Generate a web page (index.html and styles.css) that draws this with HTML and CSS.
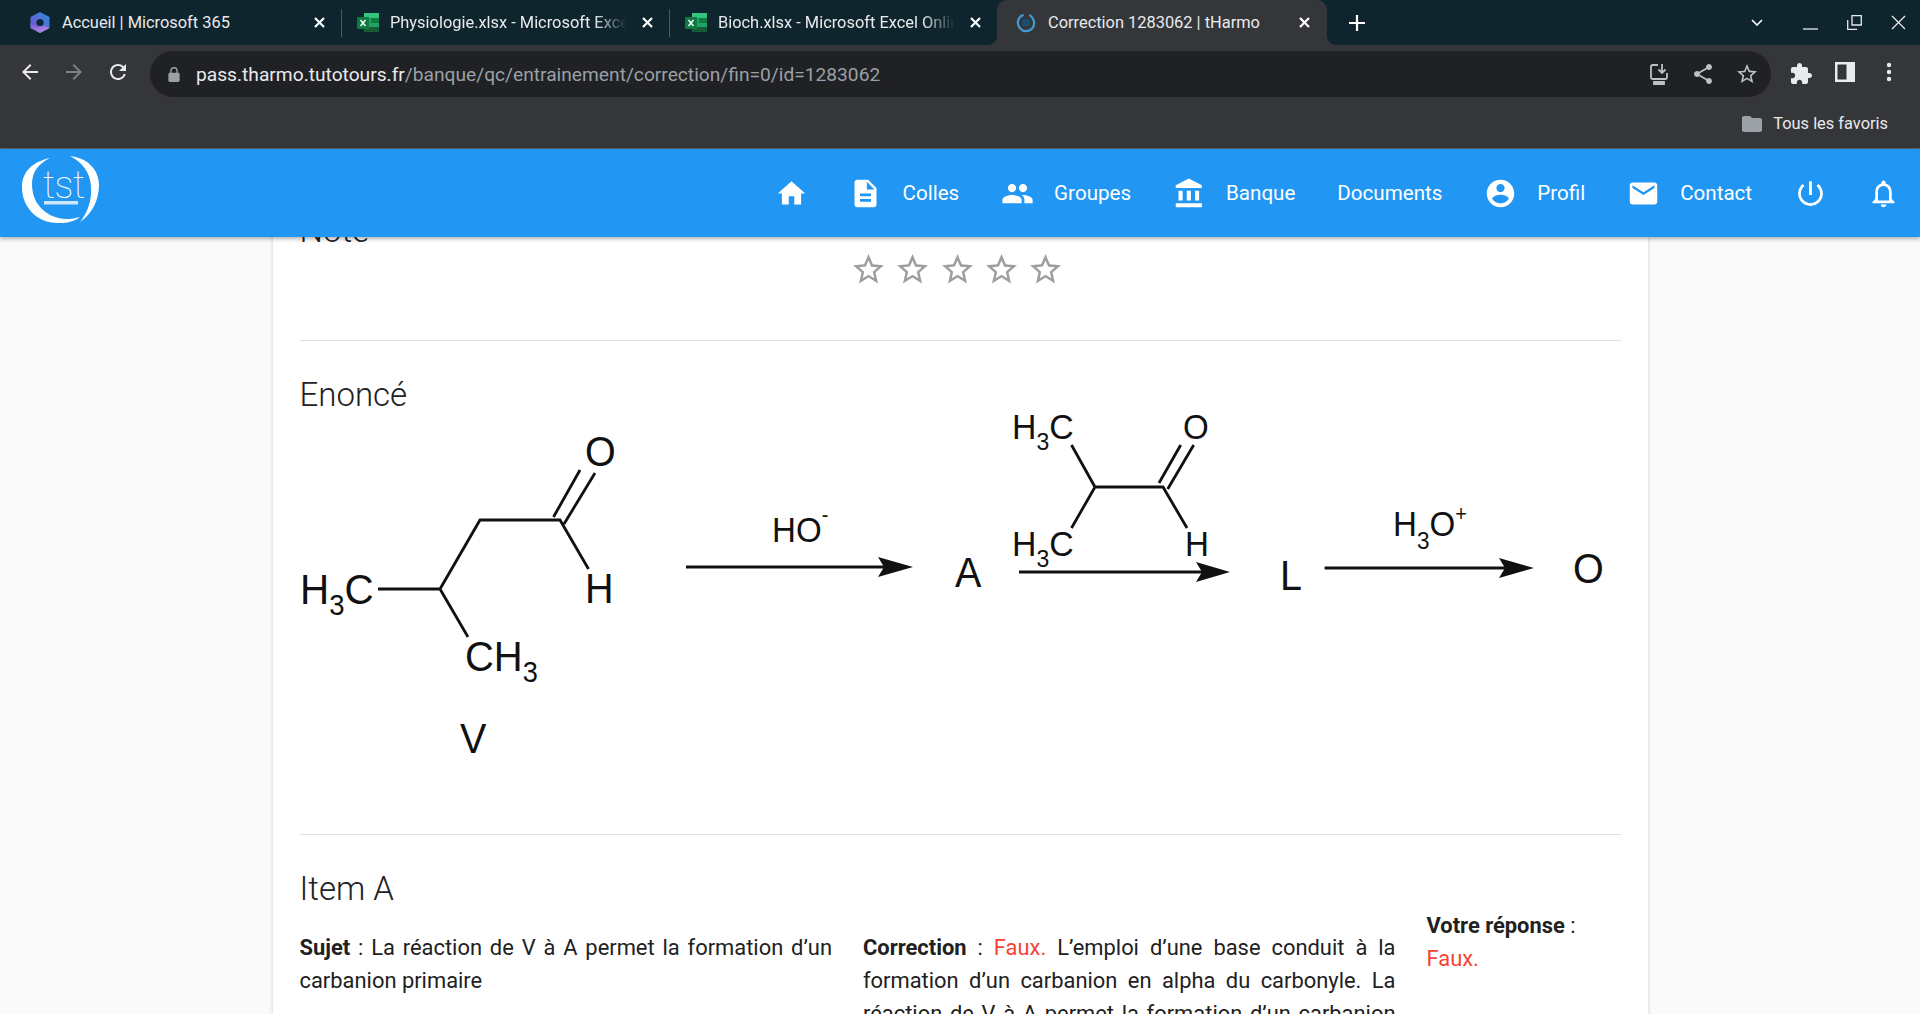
FILE: index.html
```html
<!DOCTYPE html>
<html lang="fr">
<head>
<meta charset="utf-8">
<title>Correction 1283062 | tHarmo</title>
<link rel="stylesheet" href="styles.css">
</head>
<body>
<div class="app">
  <header class="chrome">
    <div class="tabstrip">
      <div class="tab">
        <svg class="favicon" viewBox="0 0 21 21"><defs><linearGradient id="m1" x1="1" y1="0" x2="0" y2="1"><stop offset="0" stop-color="#2a8fd8"/><stop offset=".55" stop-color="#5a6ad8"/><stop offset="1" stop-color="#7b4fc8"/></linearGradient><linearGradient id="m2" x1="0" y1="0" x2="1" y2="1"><stop offset="0" stop-color="#6f5bd6"/><stop offset="1" stop-color="#c890e8"/></linearGradient></defs><path fill="url(#m1)" d="M10.500 0 20 5v11l-9.500 5L1 16V5z"/><path fill="url(#m2)" d="M1 11l7 4 7-1 5 2-9.500 5L1 16z"/><circle cx="10.500" cy="10.500" r="3.600" fill="#10263a"/></svg>
        <span class="tab-title plain">Accueil | Microsoft 365</span>
        <svg class="tab-close" viewBox="0 0 11 11"><path d="M1 1l9 9M10 1l-9 9"/></svg>
      </div>
      <i class="tab-sep"></i>
      <div class="tab">
        <svg class="favicon" viewBox="0 0 22 21"><rect x="7" y="1" width="15" height="19" fill="#21a366"/><rect x="7" y="1" width="15" height="5" fill="#33c481"/><rect x="14" y="6" width="8" height="5" fill="#107c41"/><rect x="7" y="15" width="15" height="5" fill="#185c37"/><rect x="0" y="5" width="12" height="12" rx="1" fill="#0e7a40"/><path d="M3.500 8l5 6M8.500 8l-5 6" stroke="#fff" stroke-width="1.400"/></svg>
        <span class="tab-title">Physiologie.xlsx - Microsoft Excel Online</span>
        <svg class="tab-close" viewBox="0 0 11 11"><path d="M1 1l9 9M10 1l-9 9"/></svg>
      </div>
      <i class="tab-sep"></i>
      <div class="tab">
        <svg class="favicon" viewBox="0 0 22 21"><rect x="7" y="1" width="15" height="19" fill="#21a366"/><rect x="7" y="1" width="15" height="5" fill="#33c481"/><rect x="14" y="6" width="8" height="5" fill="#107c41"/><rect x="7" y="15" width="15" height="5" fill="#185c37"/><rect x="0" y="5" width="12" height="12" rx="1" fill="#0e7a40"/><path d="M3.500 8l5 6M8.500 8l-5 6" stroke="#fff" stroke-width="1.400"/></svg>
        <span class="tab-title">Bioch.xlsx - Microsoft Excel Online</span>
        <svg class="tab-close" viewBox="0 0 11 11"><path d="M1 1l9 9M10 1l-9 9"/></svg>
      </div>
      <div class="tab tab-active">
        <svg class="favicon small" viewBox="0 0 21 21"><path d="M8 2C4 3 1.500 7 2 11c.5 4 4 8 8 8 5 0 9-3 9-8 0-4-2-7-5-9" fill="none" stroke="#3f9bd0" stroke-width="2.400"/><rect x="6.500" y="6" width="8" height="8" rx="1.500" fill="#1b4f70"/></svg>
        <span class="tab-title plain">Correction 1283062 | tHarmo</span>
        <svg class="tab-close" viewBox="0 0 11 11"><path d="M1 1l9 9M10 1l-9 9"/></svg>
      </div>
      <svg class="newtab" viewBox="0 0 16 16"><path d="M8 0v16M0 8h16"/></svg>
      <div class="window-controls">
        <svg class="wc-chevron" viewBox="0 0 12 7"><path d="M1 1l5 5 5-5"/></svg>
        <svg class="wc" viewBox="0 0 15 15"><path d="M0 14h15"/></svg>
        <svg class="wc" viewBox="0 0 15 15"><path d="M0.700 5v9.300h9.300M5 .7h9.300V10H5z"/></svg>
        <svg class="wc" viewBox="0 0 15 15"><path d="M1 1l13 13M14 1L1 14"/></svg>
      </div>
    </div>
    <div class="toolbar">
      <button class="tb-btn up"><svg viewBox="0 0 24 24"><path d="M20 11H7.830l5.590-5.590L12 4l-8 8 8 8 1.410-1.410L7.830 13H20v-2z"/></svg></button>
      <button class="tb-btn up dim"><svg viewBox="0 0 24 24"><path d="M4 11h12.170l-5.590-5.590L12 4l8 8-8 8-1.410-1.410L16.170 13H4v-2z"/></svg></button>
      <button class="tb-btn up"><svg viewBox="0 0 24 24"><path d="M17.650 6.350A7.958 7.958 0 0 0 12 4c-4.420 0-7.990 3.580-7.990 8s3.570 8 7.990 8c3.730 0 6.840-2.550 7.730-6h-2.080A5.990 5.990 0 0 1 12 18c-3.310 0-6-2.690-6-6s2.690-6 6-6c1.660 0 3.140.69 4.220 1.780L13 11h7V4l-2.350 2.350z"/></svg></button>
      <div class="omnibox">
        <svg class="lock" viewBox="0 0 12 16"><path d="M10.500 6H10V4a4 4 0 0 0-8 0v2h-.5C.7 6 0 6.700 0 7.500v7C0 15.300.7 16 1.500 16h9c.8 0 1.500-.7 1.500-1.500v-7C12 6.700 11.300 6 10.500 6zM3.500 6V4a2.500 2.500 0 0 1 5 0v2z"/></svg>
        <span class="url"><b>pass.tharmo.tutotours.fr</b>/banque/qc/entrainement/correction/fin=0/id=1283062</span>
        <button class="tb-btn omni-btn"><svg viewBox="0 0 24 24" class="stroke-icon"><path d="M11 3H5.500A1.500 1.500 0 0 0 4 4.500v11A1.500 1.500 0 0 0 5.500 17h13a1.500 1.500 0 0 0 1.500-1.500V11M15 2v9m-3.500-3.500L15 11l3.500-3.500"/><path d="M7 20h10v2H7z" fill="#bdc1c6"/></svg></button>
        <button class="tb-btn omni-btn"><svg viewBox="0 0 24 24"><path d="M18 16.080c-.76 0-1.440.3-1.960.77L8.910 12.700c.05-.23.09-.46.09-.7s-.04-.47-.09-.7l7.050-4.110c.54.5 1.250.81 2.040.81 1.660 0 3-1.340 3-3s-1.340-3-3-3-3 1.340-3 3c0 .24.04.47.09.7L8.040 9.810C7.500 9.310 6.790 9 6 9c-1.660 0-3 1.340-3 3s1.340 3 3 3c.79 0 1.500-.31 2.040-.81l7.120 4.160c-.05.21-.08.43-.08.65 0 1.610 1.310 2.920 2.920 2.920s2.920-1.310 2.920-2.920-1.310-2.920-2.920-2.920z"/></svg></button>
        <button class="tb-btn omni-btn"><svg viewBox="0 0 24 24"><path d="M22 9.240l-7.190-.62L12 2 9.190 8.630 2 9.240l5.460 4.730L5.820 21 12 17.270 18.180 21l-1.630-7.030L22 9.240zM12 15.400l-3.760 2.270 1-4.280-3.320-2.880 4.380-.38L12 6.100l1.710 4.040 4.380.38-3.320 2.880 1 4.280L12 15.400z"/></svg></button>
      </div>
      <div class="tb-right">
        <button class="tb-btn"><svg viewBox="0 0 24 24"><path d="M20.500 11H19V7c0-1.100-.9-2-2-2h-4V3.500C13 2.120 11.880 1 10.500 1S8 2.120 8 3.500V5H4c-1.100 0-1.990.9-1.990 2v3.800H3.500c1.490 0 2.700 1.210 2.700 2.700s-1.210 2.700-2.700 2.700H2V20c0 1.100.9 2 2 2h3.800v-1.500c0-1.490 1.210-2.700 2.700-2.700 1.490 0 2.700 1.210 2.700 2.700V22H17c1.100 0 2-.9 2-2v-4h1.500c1.380 0 2.500-1.120 2.500-2.500S21.880 11 20.500 11z"/></svg></button>
        <button class="tb-btn up"><svg viewBox="0 0 24 24"><path fill-rule="evenodd" d="M2 2h20v20H2zM4.500 4.500v15h9v-15z"/></svg></button>
        <button class="tb-btn up"><svg viewBox="0 0 24 24"><circle cx="12" cy="5" r="2.200"/><circle cx="12" cy="12" r="2.200"/><circle cx="12" cy="19" r="2.200"/></svg></button>
      </div>
    </div>
    <div class="bookmarks">
      <svg class="folder" viewBox="0 0 20 16"><path d="M2 0h6l2 2h8c1.100 0 2 .9 2 2v10c0 1.100-.9 2-2 2H2c-1.100 0-2-.9-2-2V2C0 .9.9 0 2 0z"/></svg>
      <span>Tous les favoris</span>
    </div>
  </header>

  <nav class="navbar">
    <svg class="logo" viewBox="20 153 84 74">
      <path fill="#fff" d="M50 158C32 162 22 172 22 187 22 208 38 224 60 223 68 223 75 221 80 217 70 220 60 220 50 215 38 208 32 198 32 184 32 172 38 164 50 158Z"/>
      <path fill="#fff" d="M70 156C88 158 99 170 99 185 99 200 92 214 80 222 88 212 92 200 91 186 90 172 82 162 70 156Z"/>
      <text class="logo-text" x="43" y="198">tst</text>
      <rect x="44" y="201" width="34" height="3.500" fill="#cfe8fc"/>
    </svg>
    <ul class="nav-items">
      <li><svg viewBox="0 0 24 24"><path d="M10 20v-6h4v6h5v-8h3L12 3 2 12h3v8z"/></svg></li>
      <li><svg viewBox="0 0 24 24"><path d="M14 2H6c-1.100 0-1.990.9-1.990 2L4 20c0 1.100.89 2 1.990 2H18c1.100 0 2-.9 2-2V8l-6-6zm2 16H8v-2h8v2zm0-4H8v-2h8v2zm-3-5V3.500L18.500 9H13z"/></svg><span>Colles</span></li>
      <li><svg viewBox="0 0 24 24"><path d="M16 11c1.660 0 2.990-1.340 2.990-3S17.660 5 16 5c-1.660 0-3 1.340-3 3s1.340 3 3 3zm-8 0c1.660 0 2.990-1.340 2.990-3S9.660 5 8 5C6.340 5 5 6.340 5 8s1.340 3 3 3zm0 2c-2.330 0-7 1.170-7 3.500V19h14v-2.500c0-2.330-4.670-3.500-7-3.500zm8 0c-.29 0-.62.02-.97.05 1.160.84 1.970 1.970 1.970 3.450V19h6v-2.500c0-2.330-4.670-3.500-7-3.500z"/></svg><span>Groupes</span></li>
      <li><svg viewBox="0 0 24 24"><path d="M4 10v7h3v-7H4zm6 0v7h3v-7h-3zM2 22h19v-3H2v3zm14-12v7h3v-7h-3zm-4.500-9L2 6v2h19V6l-9.500-5z"/></svg><span>Banque</span></li>
      <li><span class="no-icon">Documents</span></li>
      <li><svg viewBox="0 0 24 24"><path d="M12 2C6.480 2 2 6.480 2 12s4.480 10 10 10 10-4.480 10-10S17.520 2 12 2zm0 3c1.660 0 3 1.340 3 3s-1.340 3-3 3-3-1.340-3-3 1.340-3 3-3zm0 14.200c-2.500 0-4.710-1.280-6-3.220.03-1.990 4-3.080 6-3.080 1.990 0 5.970 1.090 6 3.080-1.290 1.940-3.500 3.220-6 3.220z"/></svg><span>Profil</span></li>
      <li><svg viewBox="0 0 24 24"><path d="M20 4H4c-1.100 0-1.990.9-1.990 2L2 18c0 1.100.9 2 2 2h16c1.100 0 2-.9 2-2V6c0-1.100-.9-2-2-2zm0 4l-8 5-8-5V6l8 5 8-5v2z"/></svg><span>Contact</span></li>
      <li><svg viewBox="0 0 24 24"><path d="M13 3h-2v10h2V3zm4.830 2.170l-1.420 1.420C17.990 7.860 19 9.810 19 12c0 3.870-3.130 7-7 7s-7-3.130-7-7c0-2.190 1.010-4.140 2.580-5.420L6.170 5.170C4.230 6.820 3 9.260 3 12c0 4.970 4.030 9 9 9s9-4.030 9-9c0-2.740-1.230-5.180-3.170-6.830z"/></svg></li>
      <li><svg viewBox="0 0 24 24"><path d="M12 22c1.100 0 2-.9 2-2h-4c0 1.100.9 2 2 2zm6-6v-5c0-3.070-1.640-5.640-4.500-6.320V4c0-.83-.67-1.500-1.500-1.500s-1.500.67-1.500 1.500v.68C7.630 5.360 6 7.920 6 11v5l-2 2v1h16v-1l-2-2zm-2 1H8v-6c0-2.480 1.510-4.500 4-4.500s4 2.020 4 4.500v6z"/></svg></li>
    </ul>
  </nav>

  <main class="page">
    <section class="card">
      <h2 class="title note-title">Note</h2>
      <div class="stars">
        <svg viewBox="0 0 24 24"><path d="M22 9.240l-7.190-.62L12 2 9.190 8.630 2 9.240l5.460 4.730L5.820 21 12 17.270 18.180 21l-1.630-7.030L22 9.240zM12 15.400l-3.760 2.270 1-4.280-3.320-2.880 4.380-.38L12 6.100l1.710 4.040 4.380.38-3.320 2.880 1 4.280L12 15.400z"/></svg>
        <svg viewBox="0 0 24 24"><path d="M22 9.240l-7.190-.62L12 2 9.190 8.630 2 9.240l5.460 4.730L5.820 21 12 17.270 18.180 21l-1.630-7.030L22 9.240zM12 15.400l-3.760 2.270 1-4.280-3.320-2.880 4.380-.38L12 6.100l1.710 4.040 4.380.38-3.320 2.880 1 4.280L12 15.400z"/></svg>
        <svg viewBox="0 0 24 24"><path d="M22 9.240l-7.190-.62L12 2 9.190 8.630 2 9.240l5.460 4.730L5.820 21 12 17.270 18.180 21l-1.630-7.030L22 9.240zM12 15.400l-3.760 2.270 1-4.280-3.320-2.880 4.380-.38L12 6.100l1.710 4.040 4.380.38-3.320 2.880 1 4.280L12 15.400z"/></svg>
        <svg viewBox="0 0 24 24"><path d="M22 9.240l-7.190-.62L12 2 9.190 8.630 2 9.240l5.460 4.730L5.820 21 12 17.270 18.180 21l-1.630-7.030L22 9.240zM12 15.400l-3.760 2.270 1-4.280-3.320-2.880 4.380-.38L12 6.100l1.710 4.040 4.380.38-3.320 2.880 1 4.280L12 15.400z"/></svg>
        <svg viewBox="0 0 24 24"><path d="M22 9.240l-7.190-.62L12 2 9.190 8.630 2 9.240l5.460 4.730L5.820 21 12 17.270 18.180 21l-1.630-7.030L22 9.240zM12 15.400l-3.760 2.270 1-4.280-3.320-2.880 4.380-.38L12 6.100l1.710 4.040 4.380.38-3.320 2.880 1 4.280L12 15.400z"/></svg>
      </div>
      <hr class="rule first">
      <h2 class="title">Enoncé</h2>
      <svg class="scheme" viewBox="300 415 1321 385">
        <g class="bonds">
          <path d="M378 589H440L480 520H560L588.500 569M440 589L468 637M553.500 517L580 470M564 524L595 473"/>
          <path d="M1071.500 445L1095 487H1163L1187 528M1095 487L1071.500 528M1159 483L1180.700 445M1167.700 489L1193.700 445"/>
          <path d="M686 567H885M1019 572H1205M1324.600 568H1510"/>
        </g>
        <path class="head" d="M913 567L878 557L884 567L878 577Z"/>
        <path class="head" d="M1230 572L1196 562L1202 572L1196 582Z"/>
        <path class="head" d="M1534 568L1499 558L1505 568L1499 578Z"/>
        <g class="chem big">
          <text transform="translate(300 604) scale(.94 1)">H<tspan class="sub" dy="11">3</tspan><tspan dy="-11">C</tspan></text>
          <text transform="translate(585 466) scale(.92 1)">O</text>
          <text transform="translate(585 603) scale(.92 1)">H</text>
          <text transform="translate(465 671) scale(.93 1)">CH<tspan class="sub" dy="11">3</tspan></text>
          <text transform="translate(460 753) scale(.92 1)">V</text>
          <text transform="translate(955 587) scale(.92 1)">A</text>
          <text transform="translate(1280 590) scale(.92 1)">L</text>
          <text transform="translate(1573 583) scale(.92 1)">O</text>
        </g>
        <g class="chem mid">
          <text transform="translate(772 542) scale(.92 1)">HO<tspan class="sup" dy="-20">-</tspan></text>
          <text transform="translate(1012 439) scale(.94 1)">H<tspan class="sub" dy="11">3</tspan><tspan dy="-11">C</tspan></text>
          <text transform="translate(1183 439) scale(.92 1)">O</text>
          <text transform="translate(1012 556) scale(.94 1)">H<tspan class="sub" dy="11">3</tspan><tspan dy="-11">C</tspan></text>
          <text transform="translate(1185 556) scale(.92 1)">H</text>
          <text transform="translate(1393 536) scale(.92 1)">H<tspan class="sub" dy="13">3</tspan><tspan dy="-13">O</tspan><tspan class="sup" dy="-15">+</tspan></text>
        </g>
      </svg>
      <hr class="rule">
      <h2 class="title">Item A</h2>
      <div class="item-grid">
        <p class="item-col"><strong>Sujet</strong> : La réaction de V à A permet la formation d’un carbanion primaire</p>
        <p class="item-col"><strong>Correction</strong> : <span class="wrong">Faux.</span> L’emploi d’une base conduit à la formation d’un carbanion en alpha du carbonyle. La réaction de V à A permet la formation d’un carbanion secondaire.</p>
        <div class="answer">
          <p><strong>Votre réponse</strong> :</p>
          <p class="wrong">Faux.</p>
        </div>
      </div>
    </section>
  </main>
</div>
</body>
</html>
```
FILE: styles.css
```css
* { box-sizing: border-box; }
html, body { margin: 0; height: 100%; overflow: hidden; }
body { font-family: Roboto, "Liberation Sans", sans-serif; color: #212121; background: #fafafa; }
.app { display: flex; flex-direction: column; height: 1014px; }

/* browser chrome */
.chrome { background: #35363a; color: #e8eaed; flex: none; }
.tabstrip { display: flex; align-items: center; height: 45px; background: #0f252d; padding-left: 13px; }
.tab { display: flex; align-items: center; width: 328px; height: 45px; padding: 0 16px; font-size: 16.400px; color: #e8eaed; flex: none; }
.tab-sep { width: 1px; height: 28px; margin: 0 -1px 0 0; background: #4a5a60; flex: none; position: relative; }
.favicon { width: 22px; height: 21px; flex: none; margin-right: 11px; }
.favicon.small { width: 20px; height: 20px; margin: 0 12px 0 3px; }
.tab-title { flex: 1; min-width: 0; white-space: nowrap; overflow: hidden; -webkit-mask-image: linear-gradient(to right, #000 84%, transparent 97%); mask-image: linear-gradient(to right, #000 84%, transparent 97%); }
.tab-title.plain { -webkit-mask-image: none; mask-image: none; }
.tab-close { width: 11px; height: 11px; flex: none; margin: 0 0 0 8px; }
.tab-close path { stroke: #fff; stroke-width: 2.2; fill: none; }
.tab-active { position: relative; width: 330px; background: #35363a; border-radius: 10px 10px 0 0; padding: 0 17px 0 16px; }
.tab-active::before, .tab-active::after { content: ""; position: absolute; bottom: 0; width: 10px; height: 10px; }
.tab-active::before { left: -10px; background: radial-gradient(circle at 0 0, transparent 10px, #35363a 10.5px); }
.tab-active::after { right: -10px; background: radial-gradient(circle at 100% 0, transparent 10px, #35363a 10.5px); }
.newtab { width: 16px; height: 16px; margin-left: 22px; flex: none; }
.newtab path { stroke: #fff; stroke-width: 2.2; fill: none; }
.window-controls { display: flex; align-items: center; margin-left: auto; padding-right: 14px; }
.wc-chevron { width: 12px; height: 7px; margin-right: 40px; }
.wc-chevron path { stroke: #fff; stroke-width: 1.6; fill: none; }
.wc { width: 15px; height: 15px; margin-left: 29px; }
.wc-chevron + .wc { margin-left: 0; }
.wc path { stroke: #e8eaed; stroke-width: 1.3; fill: none; }

.toolbar { display: flex; align-items: center; height: 58px; padding: 6px 9px 6px 8px; }
.tb-btn { width: 44px; height: 46px; flex: none; display: flex; align-items: center; justify-content: center; padding: 0; border: 0; background: none; }
.tb-btn.up { padding-bottom: 4px; }
.tb-btn svg { width: 24px; height: 24px; fill: #e8eaed; }
.tb-btn.dim svg { fill: #7f8184; }
.omnibox { flex: 1; min-width: 0; height: 46px; margin: 0 8px 0 10px; padding: 0 2px 0 18px; display: flex; align-items: center; background: #202124; border-radius: 23px; }
.lock { width: 12px; height: 15px; fill: #9aa0a6; flex: none; margin-right: 16px; }
.url { flex: 1; font-size: 19.200px; color: #9aa0a6; white-space: nowrap; }
.url b { font-weight: 400; color: #e8eaed; }
.omni-btn svg { fill: #bdc1c6; }
.omni-btn .stroke-icon { fill: none; stroke: #bdc1c6; stroke-width: 1.800; }
.tb-right { display: flex; }
.bookmarks { display: flex; align-items: center; justify-content: flex-end; height: 46px; padding: 0 32px 4px 0; font-size: 16.400px; color: #e8eaed; border-bottom: 1px solid #5f6064; }
.folder { width: 20px; height: 16px; fill: #9aa0a6; margin-right: 11px; }

/* site navbar */
.navbar { position: relative; z-index: 2; flex: none; display: flex; align-items: center; justify-content: space-between; height: 88px; padding-left: 20px; background: #2196f3; color: #fff; box-shadow: 0 2px 4px rgba(0,0,0,.3); }
.logo { width: 84px; height: 74px; margin-bottom: 6px; flex: none; }
.logo-text { font-family: Roboto, sans-serif; font-weight: 100; font-size: 38px; fill: #fff; letter-spacing: -.5px; }
.nav-items { display: flex; align-items: center; list-style: none; margin: 0; padding: 0; }
.nav-items li { display: flex; align-items: center; padding: 0 20px; font-size: 20.600px; }
.nav-items li:nth-last-child(n+3) { margin-right: 1.900px; }
.nav-items svg { width: 33px; height: 33px; fill: #fff; flex: none; }
.nav-items span { margin-left: 20px; }
.nav-items .no-icon { margin-left: 0; }

/* page content */
.page { flex: 1; min-height: 0; overflow: hidden; }
.card { width: 1375px; margin: 0 auto; padding: 0 27px; background: #fff; box-shadow: 0 0 4px rgba(0,0,0,.18); }
.title { margin: 0; font-size: 33px; line-height: 40px; font-weight: 300; color: #212121; }
.note-title { margin-top: -26px; }
.stars { display: flex; justify-content: center; gap: 7.400px; height: 37px; padding-right: 6px; }
.stars svg { width: 37px; height: 37px; fill: #9e9e9e; }
.rule { height: 1px; margin: 34px 0; border: 0; background: #e0e0e0; }
.rule.first { margin-top: 52px; }
.scheme { display: block; width: 1321px; height: 385px; }
.bonds path { fill: none; stroke: #111; stroke-width: 2.800; }
.head { fill: #111; }
.chem text { font-family: "Liberation Sans", Arial, sans-serif; fill: #111; }
.chem.big text { font-size: 43px; }
.chem.mid text { font-size: 36px; }
.sub { font-size: 68%; }
.sup { font-size: 60%; }
.item-grid { display: grid; grid-template-columns: 532.500px 532.500px 194px; column-gap: 31px; font-size: 21.900px; line-height: 33px; }
.item-grid p { margin: 0; }
.item-grid .item-col { padding-top: 22px; text-align: justify; }
.item-grid strong { font-weight: 700; }
.wrong { color: #f44336; }
```
